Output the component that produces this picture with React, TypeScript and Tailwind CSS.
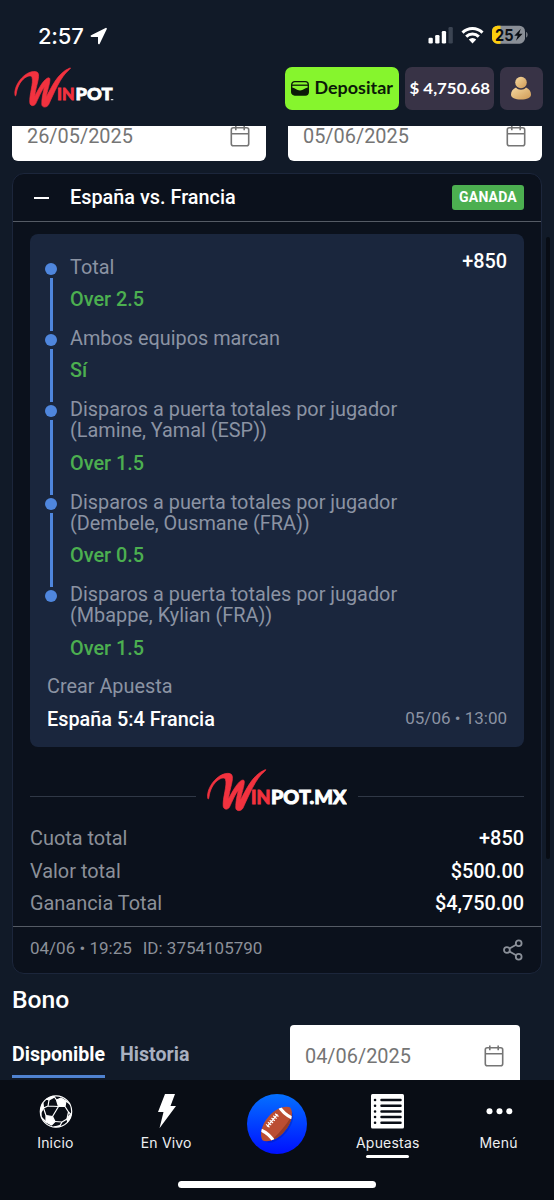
import React from "react";

const roboto = "font-['Roboto','Liberation_Sans',sans-serif]";

function Swoosh() {
  return (
    <path
      d="M0.8 29.500 C-0.500 24 3 15 10 9 C16 4 22 3.400 24.500 5.500 C27.500 9 22.500 20 21.500 30 C26 21 32 11 36 11 C39.500 11 35 22 33.500 31 C38.500 22 45 6 58 0.800 C60 0.200 58.500 1.600 57 3 C49 9 41.500 27 36 39 C34 42.700 29 42.300 28.800 39 C28.500 33 30.500 25 31.500 21 C28 25 25 33 22.500 38 C21 41 16.500 41 16.200 37 C15.500 29 20.500 16 18.500 10.500 C17 6 4 12 1.900 28.500 C1.800 30 1.200 30.300 0.800 29.500 Z"
      fill="#f2323f"
      stroke="#f2323f"
      strokeWidth="0.7"
    />
  );
}

function Logo() {
  return (
    <svg width="102" height="43" viewBox="0 0 102 43" className="block">
      <g transform="translate(0.3 0.3) scale(0.955)"><Swoosh /></g>
      <g fontFamily="Lato, sans-serif" fontWeight="900" fontSize="17.800" strokeWidth="0.8">
        <text x="43" y="33" fill="#f2323f" stroke="#f2323f" textLength="17.500" lengthAdjust="spacingAndGlyphs">IN</text>
        <text x="61.500" y="33" fill="#fff" stroke="#fff" textLength="37" lengthAdjust="spacingAndGlyphs">POT</text>
      </g>
      <path d="M96.800 32.700h2.500" stroke="#fff" strokeWidth="1" />
    </svg>
  );
}

function LogoMx() {
  return (
    <svg width="140" height="43" viewBox="0 0 140 43" className="block">
      <Swoosh />
      <g fontFamily="Lato, sans-serif" fontWeight="900" fontSize="19.500" strokeWidth="0.9">
        <text x="44" y="34.700" fill="#f2323f" stroke="#f2323f" textLength="19.500" lengthAdjust="spacingAndGlyphs">IN</text>
        <text x="64" y="34.700" fill="#fff" stroke="#fff" textLength="75.500" lengthAdjust="spacingAndGlyphs">POT.MX</text>
      </g>
    </svg>
  );
}

function CalendarIcon() {
  return (
    <svg width="20" height="22" viewBox="0 0 20 22" fill="none" stroke="#757575" strokeWidth="1.600" className="mr-[1px]">
      <rect x="1.300" y="2.800" width="17.400" height="18" rx="2" />
      <path d="M1.300 8.700h17.400M5.800 0.500v4.800M14.200 0.500v4.800" />
    </svg>
  );
}

function DateField({ value, className }: { value: string; className: string }) {
  return (
    <div className={`flex shrink-0 items-center justify-between bg-white text-[19.900px] text-[#757575] ${className}`}>
      <span className="mt-[2px]">{value}</span>
      <CalendarIcon />
    </div>
  );
}

const legs = [
  { label: ["Total"], value: "Over 2.5" },
  { label: ["Ambos equipos marcan"], value: "Sí" },
  { label: ["Disparos a puerta totales por jugador", "(Lamine, Yamal (ESP))"], value: "Over 1.5" },
  { label: ["Disparos a puerta totales por jugador", "(Dembele, Ousmane (FRA))"], value: "Over 0.5" },
  { label: ["Disparos a puerta totales por jugador", "(Mbappe, Kylian (FRA))"], value: "Over 1.5" },
];

const totals = [
  ["Cuota total", "+850"],
  ["Valor total", "$500.00"],
  ["Ganancia Total", "$4,750.00"],
];

function StatusBar() {
  return (
    <div className="flex h-[67px] items-start justify-between pl-[38px] pr-[26px] pt-[25px]">
      <div className="flex items-center gap-[6px]">
        <span className="font-['Inter',sans-serif] text-[22px] font-medium leading-[22px] tracking-[-0.2px] text-white">2:57</span>
        <svg width="18" height="18" viewBox="0 0 18 18">
          <path d="M16 1.700 L1.500 9 H8.900 V16.300 Z" fill="#fff" stroke="#fff" strokeWidth="1.800" strokeLinejoin="round" />
        </svg>
      </div>
      <div className="flex items-center gap-[8px]">
        <svg width="25" height="18" viewBox="0 0 25 18" fill="#fff">
          <rect x="0.500" y="11.800" width="4.300" height="5.700" rx="1.300" />
          <rect x="7.200" y="9" width="4.300" height="8.500" rx="1.300" />
          <rect x="13.800" y="5" width="4.300" height="12.500" rx="1.300" />
          <rect x="20.500" y="1" width="4.300" height="16.500" rx="1.300" fill="#3b4452" />
        </svg>
        <svg width="23" height="18" viewBox="0 0 23 18" fill="none" stroke="#fff" strokeWidth="3">
          <path d="M1.500 6.600 A14.300 14.300 0 0 1 21.500 6.600" />
          <path d="M5.200 10.600 A9 9 0 0 1 17.800 10.600" />
          <path d="M11.500 17.600 L7.800 13.600 A5.200 5.200 0 0 1 15.200 13.600 Z" fill="#fff" stroke="none" />
        </svg>
        <svg width="36" height="20" viewBox="0 0 36 20">
          <defs>
            <clipPath id="battery"><rect x="0" y="0.700" width="33" height="18" rx="5.500" /></clipPath>
          </defs>
          <g clipPath="url(#battery)">
            <rect width="33" height="20" fill="#8a8f97" />
            <rect width="8.500" height="20" fill="#fdce0d" />
          </g>
          <path d="M34.200 7 v5.500 c1.800-.5 1.800-5 0-5.500" fill="#8a8f97" />
          <text x="3" y="15.600" fontFamily="Inter, sans-serif" fontWeight="700" fontSize="16" textLength="18.500" lengthAdjust="spacingAndGlyphs" fill="#0c0f14">25</text>
          <path d="M28.800 3.800 L22.300 10.700 h3.400 L24 15.700 L30.600 8.700 h-3.500 Z" fill="#0c0f14" />
        </svg>
      </div>
    </div>
  );
}

function Header() {
  return (
    <div className="flex h-[59px] items-start justify-between pl-[14px] pr-[11px]">
      <Logo />
      <div className="flex gap-[6px]">
        <button className="flex h-[43px] w-[114px] items-center gap-[5px] rounded-[7px] bg-[#86f52d] pl-[6px]">
          <svg width="18" height="15" viewBox="0 0 18 15">
            <rect x="0.700" y="0.700" width="16.600" height="13.300" rx="3" fill="none" stroke="#0b1a08" strokeWidth="1.300" />
            <path d="M0.700 4.200h16.600" stroke="#0b1a08" strokeWidth="1.300" />
            <path d="M0.700 6.500 C4 6.500 5.500 9.500 9 9.500 C12.500 9.500 14 6.500 17.300 6.500 V11 a3 3 0 0 1-3 3 H3.700 a3 3 0 0 1-3-3Z" fill="#0b1a08" />
          </svg>
          <svg width="81" height="24" viewBox="0 0 81 24">
            <text x="0.500" y="17" fontFamily="Lato, sans-serif" fontWeight="700" fontSize="16.500" textLength="78.500" lengthAdjust="spacingAndGlyphs" fill="#0b1a08">Depositar</text>
          </svg>
        </button>
        <div className="flex h-[43px] w-[89px] items-center justify-center rounded-[7px] bg-[#383346]">
          <svg width="82" height="24" viewBox="0 0 82 24">
            <text x="0.500" y="17" fontFamily="Lato, sans-serif" fontWeight="700" fontSize="16" textLength="80.500" lengthAdjust="spacingAndGlyphs" fill="#fff">$ 4,750.68</text>
          </svg>
        </div>
        <div className="flex h-[43px] w-[43px] items-center justify-center rounded-[7px] bg-[#383346]">
          <svg width="22" height="24" viewBox="0 0 22 24" className="-ml-[1px] -mt-[1px]">
            <defs>
              <linearGradient id="gold" x1="0" y1="0" x2="1" y2="1">
                <stop offset="0" stopColor="#f6d9a0" />
                <stop offset="1" stopColor="#cf9a55" />
              </linearGradient>
            </defs>
            <circle cx="11" cy="6.500" r="5.800" fill="url(#gold)" />
            <path d="M6 11.600 C8.300 14.500 13.700 14.500 16 11.600 C19 13 21 15.500 21 18.500 C21 22 17 23.500 11 23.500 C5 23.500 1 22 1 18.500 C1 15.500 3 13 6 11.600Z" fill="url(#gold)" />
          </svg>
        </div>
      </div>
    </div>
  );
}

function BetCard() {
  return (
    <section className="mx-[12px] mt-[12px] flex h-[801px] shrink-0 flex-col rounded-[12px] border border-[#1c263b] bg-[#0b111c]">
      <div className="flex h-[48px] shrink-0 items-center border-b border-[#555b65] pl-[21px] pr-[17px]">
        <span className="h-[2px] w-[15px] bg-white" />
        <h2 className="-mt-px ml-[21px] flex-1 text-[19.850px] font-medium leading-[29px] text-white">España vs. Francia</h2>
        <span className="flex h-[25px] w-[72px] items-center justify-center rounded-[3px] bg-[#4caf50] text-[14px] font-bold tracking-[0.2px] text-white">GANADA</span>
      </div>
      <div className="mx-[17px] mt-[12px] flex h-[513px] shrink-0 flex-col rounded-[8px] bg-[#1a263d] px-[17px] pt-[23px] text-[19.850px] leading-[21.300px]">
        <div className="flex justify-between">
          <ul className="flex-1">
            {legs.map((leg, i) => (
              <li key={i} className="flex">
                <div className="flex w-[23px] shrink-0 flex-col items-start">
                  <span className="ml-[-2px] mt-[6px] size-[12px] shrink-0 rounded-full bg-[#4f86dd]" />
                  {i < legs.length - 1 && <span className="-mb-[3px] ml-[2.500px] mt-[3px] w-[3px] flex-1 bg-[#4f86dd]" />}
                </div>
                <div className="pb-[17.500px]">
                  {leg.label.map((line) => (
                    <p key={line} className="whitespace-nowrap text-[#8b93a3]">{line}</p>
                  ))}
                  <p className="mt-[11px] font-medium text-[#4caf50]">{leg.value}</p>
                </div>
              </li>
            ))}
          </ul>
          <span className="-mt-[6px] font-medium text-white">+850</span>
        </div>
        <p className="text-[#8b93a3]">Crear Apuesta</p>
        <div className="mt-[11px] flex items-center justify-between">
          <span className="font-medium text-white">España 5:4 Francia</span>
          <span className="-mt-px text-[17px] text-[#8b93a3]">05/06 • 13:00</span>
        </div>
      </div>
      <div className="mx-[17px] mt-[22px] flex h-[43px] shrink-0 items-center">
        <span className="mt-[11px] h-px w-[166px] bg-[#303846]" />
        <div className="ml-[11px] flex-1"><LogoMx /></div>
        <span className="mt-[11px] h-px w-[166px] bg-[#303846]" />
      </div>
      <dl className="mx-[17px] mt-[11px] flex-1 text-[19.900px] leading-[32.700px]">
        {totals.map(([label, value]) => (
          <div key={label} className="flex justify-between">
            <dt className="text-[#8b9099]">{label}</dt>
            <dd className="font-medium text-white">{value}</dd>
          </div>
        ))}
      </dl>
      <div className="flex h-[47px] shrink-0 items-center border-t border-[#555b65] px-[17px] text-[17px] text-[#8b9099]">
        <span className="-mt-[2px]">04/06 • 19:25</span>
        <span className="-mt-[2px] ml-[11px] flex-1">ID: 3754105790</span>
        <svg width="20" height="22" viewBox="0 0 20 22" fill="none" stroke="#8b9099" strokeWidth="1.800" className="mr-[1px]">
          <circle cx="3.900" cy="11" r="2.900" />
          <circle cx="15.700" cy="4.200" r="2.900" />
          <circle cx="15.700" cy="17.800" r="2.900" />
          <path d="M6.500 9.500 13.100 5.700M6.500 12.500l6.600 3.800" />
        </svg>
      </div>
    </section>
  );
}

function BallIcon() {
  return (
    <svg width="34" height="35" viewBox="0 0 34 35">
      <defs><clipPath id="ball"><circle cx="17" cy="17.500" r="15.800" /></clipPath></defs>
      <circle cx="17" cy="17.500" r="15.700" fill="none" stroke="#fff" strokeWidth="1.200" />
      <g clipPath="url(#ball)" stroke="#fff" strokeWidth="1.200" fill="#fff" strokeLinejoin="round">
        <path d="M17.500 6 22 4 27 7 26 12.500 19.500 12.500Z" />
        <path d="M7 21.500 13.500 22.500 16 27.500 12.500 31 7 28Z" />
        <path d="M0 13 4 9.500 4.500 14 2 18.500 0 18.500Z M28 25 31.500 20 34 20 33 27 29 29Z M7 5 14 1.500 15.500 3 10 6Z M15 33 21 31.500 23 35 14 35Z" />
        <path d="M19.500 12.500 13.500 22.500M26 12.500 29.500 18 28 25M16 27.500 23 28 28 25M4.500 14 7 21.500M10 6 9 12 4.500 14M9 12 19.500 12.500M27 7 31 10M23 28 21 31.500M15.500 3 17.500 6M2 18.500 2 23 7 28M29.500 18 31.500 20" fill="none" />
      </g>
    </svg>
  );
}

function BottomNav() {
  const label = "text-[14px] leading-[18px] tracking-[0.200px]";
  return (
    <nav className="h-[120px] shrink-0 bg-[#090d15] font-['Inter',sans-serif] text-[#edeff2]">
      <div className="grid h-[101px] grid-cols-5 justify-items-center pt-[14px]">
        <div className="flex flex-col items-center gap-[5px]"><span className="ml-[2px] h-[35px]"><BallIcon /></span><span className={label}>Inicio</span></div>
        <div className="flex flex-col items-center gap-[5px]">
          <svg width="20" height="35" viewBox="0 0 20 35" className="ml-[1px]"><path d="M8 0H18L13.500 12H19L2.500 34.300L6.500 18H1Z" fill="#fff" /></svg>
          <span className={label}>En Vivo</span>
        </div>
        <svg width="60" height="60" viewBox="0 0 60 60">
          <defs>
            <linearGradient id="blue" x1="0" y1="0" x2="0" y2="1"><stop offset="0" stopColor="#0470ff" /><stop offset="1" stopColor="#0010ff" /></linearGradient>
            <clipPath id="football"><path d="M-21.500 0 C-20 -6 -10 -11 0 -11 C10 -11 20 -6 21.500 0 C20 6 10 11 0 11 C-10 11 -20 6 -21.500 0Z" /></clipPath>
          </defs>
          <circle cx="30" cy="30" r="30" fill="url(#blue)" />
          <ellipse cx="31" cy="32" rx="20" ry="10.500" transform="rotate(-50 31 32)" fill="#001a9c" opacity="0.350" />
          <g transform="translate(29.500 30) rotate(-50)" clipPath="url(#football)">
            <rect x="-23" y="-13" width="46" height="26" fill="#bb4e33" />
            <path d="M-23 5 C-10 8.500 10 8.500 23 5 V14 H-23Z" fill="#963c28" />
            <path d="M-16 -12Q-11 0-16 12M16 -12Q11 0 16 12" stroke="#fff" strokeWidth="3.200" fill="none" />
            <path d="M-8 -5.500H8M-7 -7.700v4.400M-4.200 -7.700v4.400M-1.400 -7.700v4.400M1.400 -7.700v4.400M4.200 -7.700v4.400M7 -7.700v4.400" stroke="#fff" strokeWidth="1.200" />
          </g>
        </svg>
        <div className="flex flex-col items-center gap-[5px]">
          <svg width="33" height="35" viewBox="0 0 33 35">
            <rect width="33" height="34.500" rx="1.500" fill="#fff" />
            <path d="M10.500 6H29.500M10.500 11.700H29.500M10.500 17.400H29.500M10.500 23.100H29.500M10.500 28.800H29.500M4 6h.1M4 11.700h.1M4 17.400h.1M4 23.100h.1M4 28.800h.1" stroke="#090d15" strokeWidth="2.500" strokeLinecap="round" />
          </svg>
          <span className={label}>Apuestas</span>
          <span className="-mt-[2px] h-[3px] w-[43px] rounded-full bg-white" />
        </div>
        <div className="flex flex-col items-center gap-[5px]">
          <svg width="28" height="35" viewBox="0 0 28 35" fill="#fff"><circle cx="4.500" cy="17.300" r="3" /><circle cx="14.500" cy="17.300" r="3" /><circle cx="24.300" cy="17.300" r="3" /></svg>
          <span className={label}>Menú</span>
        </div>
      </div>
      <div className="mx-auto h-[7px] w-[198px] rounded-full bg-white" />
    </nav>
  );
}

export default function App() {
  return (
    <div className={`flex h-[1200px] w-[554px] flex-col overflow-hidden bg-[#111a28] ${roboto}`}>
      <header className="h-[126px] shrink-0"><StatusBar /><Header /></header>
      <main className="relative flex h-[954px] shrink-0 flex-col overflow-hidden">
        <div className="flex h-[35px] shrink-0 items-end justify-between pl-[12px] pr-[12px]">
          <DateField value="26/05/2025" className="h-[50px] w-[254px] rounded-[6px] px-[15px]" />
          <DateField value="05/06/2025" className="h-[50px] w-[254px] rounded-[6px] px-[15px]" />
        </div>
        <BetCard />
        <h1 className="mt-[12px] pl-[12px] text-[24.700px] font-medium leading-[28px] text-white">Bono</h1>
        <div className="mt-[11px] flex h-[55px] shrink-0 items-start justify-between pl-[12px] pr-[34px] text-[19.600px] font-bold">
          <div className="flex gap-[15px]">
            <div className="flex h-[53px] flex-col justify-end border-b-[3px] border-[#4f82d0] pb-[6px] leading-[28px] text-white">Disponible</div>
            <div className="flex h-[53px] flex-col justify-end pb-[9px] leading-[28px] text-[#a9b0c0]">Historia</div>
          </div>
          <DateField value="04/06/2025" className="h-[61px] w-[230px] rounded-[4px] px-[15px] font-normal" />
        </div>
        <div className="absolute right-[4px] top-[111px] h-[622px] w-[4px] rounded-full bg-[#080c14]" />
      </main>
      <BottomNav />
    </div>
  );
}
